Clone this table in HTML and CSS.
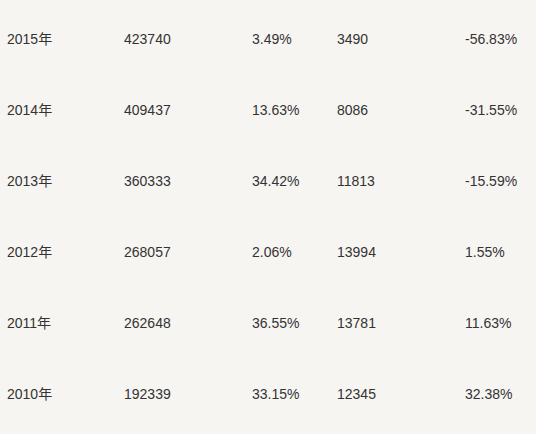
FILE: index.html
```html
<!DOCTYPE html>
<html lang="zh">
<head>
<meta charset="utf-8">
<link rel="stylesheet" href="styles.css">
</head>
<body>
<div class="table">
  <div class="row"><span>2015年</span><span>423740</span><span>3.49%</span><span>3490</span><span>-56.83%</span></div>
  <div class="row"><span>2014年</span><span>409437</span><span>13.63%</span><span>8086</span><span>-31.55%</span></div>
  <div class="row"><span>2013年</span><span>360333</span><span>34.42%</span><span>11813</span><span>-15.59%</span></div>
  <div class="row"><span>2012年</span><span>268057</span><span>2.06%</span><span>13994</span><span>1.55%</span></div>
  <div class="row"><span>2011年</span><span>262648</span><span>36.55%</span><span>13781</span><span>11.63%</span></div>
  <div class="row"><span>2010年</span><span>192339</span><span>33.15%</span><span>12345</span><span>32.38%</span></div>
</div>
</body>
</html>
```
FILE: styles.css
```css
html, body {
  margin: 0;
  padding: 0;
  background: #f7f5f2;
}
body {
  font-family: "Liberation Sans", Arial, "Noto Sans CJK SC", sans-serif;
  font-size: 14px;
  line-height: 16px;
  color: #333333;
}
.table {
  padding: 3px 0 0 7px;
}
.row {
  display: grid;
  grid-template-columns: 117px 128px 85px 128px 1fr;
  align-items: center;
  height: 71px;
}
```
